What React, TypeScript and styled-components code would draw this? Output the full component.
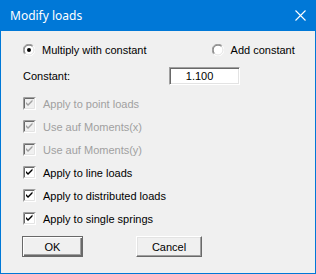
import React from 'react';
import styled, { createGlobalStyle } from 'styled-components';

const GlobalStyle = createGlobalStyle`
    html, body {
        margin: 0;
        padding: 0;
        background: #f0f0f0;
    }
`;

const Window = styled.div`
    width: 316px;
    height: 274px;
    box-sizing: border-box;
    border: 1px solid #0078d7;
    border-top: none;
    background: #f0f0f0;
    display: flex;
    flex-direction: column;
    font-family: "Liberation Sans", Arial, sans-serif;
    font-size: 11px;
    color: #000;
`;

const TitleBar = styled.div`
    height: 31px;
    margin: 0 -1px;
    background: #0078d7;
    color: #fff;
    display: flex;
    align-items: center;
    justify-content: space-between;
    padding: 0 10px 0 10px;
    font-family: "Noto Sans", "Open Sans", sans-serif;
    font-size: 12px;
`;

const Body = styled.div`
    display: flex;
    flex-direction: column;
    padding: 11px 0 0 22px;
`;

const RadioRow = styled.div`
    display: flex;
    align-items: center;
    height: 16px;
`;

const Option = styled.label<{ $offset?: number; $disabled?: boolean }>`
    display: flex;
    align-items: center;
    gap: 7px;
    margin-left: ${(p) => p.$offset ?? 0}px;
    color: ${(p) => (p.$disabled ? '#a0a0a0' : '#000')};
    white-space: nowrap;
`;

const ConstantRow = styled.div`
    display: flex;
    align-items: center;
    height: 18px;
    margin-top: 9px;
`;

const ValueBox = styled.div`
    width: 71px;
    height: 18px;
    box-sizing: border-box;
    margin-left: 99px;
    background: #fff;
    border: 1px solid;
    border-color: #a0a0a0 #fff #fff #a0a0a0;
    box-shadow: inset 1px 1px #696969, inset -1px -1px #e3e3e3;
    display: flex;
    align-items: center;
    justify-content: center;
    padding-right: 10px;
`;

const CheckList = styled.div`
    display: flex;
    flex-direction: column;
    margin-top: 7px;
`;

const CheckRow = styled.div`
    height: 23px;
    display: flex;
    align-items: center;
`;

const ButtonRow = styled.div`
    display: flex;
    gap: 53px;
    margin-top: 6px;
    margin-left: -1px;
`;

const Button = styled.button<{ $default?: boolean; $width: number }>`
    width: ${(p) => p.$width}px;
    height: 21px;
    box-sizing: border-box;
    padding: 0;
    background: #f0f0f0;
    font-family: "Liberation Sans", Arial, sans-serif;
    font-size: 11px;
    color: #000;
    border: 1px solid;
    border-color: ${(p) => (p.$default ? '#696969' : '#fff #696969 #696969 #fff')};
    box-shadow: ${(p) =>
        p.$default
            ? 'inset 1px 1px #fff, inset -1px -1px #696969, inset -2px -2px #a0a0a0'
            : 'inset -1px -1px #a0a0a0, inset 1px 1px #e3e3e3'};
`;

const CloseIcon = () => (
    <svg width="11" height="11" viewBox="0 0 11 11">
        <path d="M0.5 0.5 L10.5 10.5 M10.5 0.5 L0.5 10.5" stroke="#fff" strokeWidth="1.1" />
    </svg>
);

const Radio = ({ checked }: { checked?: boolean }) => (
    <svg width="12" height="12" viewBox="0 0 12 12">
        <circle cx="6" cy="6" r="5.5" fill="#fff" />
        <path d="M1.8 10.2 A5.5 5.5 0 0 1 10.2 1.8" stroke="#a0a0a0" fill="none" />
        <path d="M10.2 1.8 A5.5 5.5 0 0 1 1.8 10.2" stroke="#fff" fill="none" />
        <path d="M2.5 9.5 A4.6 4.6 0 0 1 9.5 2.5" stroke="#696969" fill="none" />
        <path d="M9.5 2.5 A4.6 4.6 0 0 1 2.5 9.5" stroke="#e3e3e3" fill="none" />
        {checked && <circle cx="6" cy="6" r="2" fill="#000" />}
    </svg>
);

const Check = ({ disabled }: { disabled?: boolean }) => (
    <svg width="13" height="13" viewBox="0 0 13 13">
        <rect x="0" y="0" width="13" height="13" fill="#fff" />
        <rect x="2" y="2" width="9" height="9" fill={disabled ? '#f0f0f0' : '#fff'} />
        <path d="M0.5 12.5 V0.5 H12.5" stroke="#a0a0a0" fill="none" />
        <path d="M1.5 11.5 V1.5 H11.5" stroke="#696969" fill="none" />
        <path d="M1.5 11.5 H11.5 V1.5" stroke="#e3e3e3" fill="none" />
        <path
            d="M3 5 L5 7 L9.5 2.5 L9.5 4.5 L5 9 L3 7 Z"
            fill={disabled ? '#a0a0a0' : '#000'}
        />
    </svg>
);

const checks = [
    { label: 'Apply to point loads', disabled: true },
    { label: 'Use auf Moments(x)', disabled: true },
    { label: 'Use auf Moments(y)', disabled: true },
    { label: 'Apply to line loads' },
    { label: 'Apply to distributed loads' },
    { label: 'Apply to single springs' },
];

const App: React.FC = () => (
    <>
        <GlobalStyle />
        <Window>
            <TitleBar>
                <span>Modify loads</span>
                <CloseIcon />
            </TitleBar>
            <Body>
                <RadioRow>
                    <Option>
                        <Radio checked />
                        Multiply with constant
                    </Option>
                    <Option $offset={65}>
                        <Radio />
                        Add constant
                    </Option>
                </RadioRow>
                <ConstantRow>
                    <span>Constant:</span>
                    <ValueBox>1.100</ValueBox>
                </ConstantRow>
                <CheckList>
                    {checks.map((c) => (
                        <CheckRow key={c.label}>
                            <Option $disabled={c.disabled}>
                                <Check disabled={c.disabled} />
                                {c.label}
                            </Option>
                        </CheckRow>
                    ))}
                </CheckList>
                <ButtonRow>
                    <Button $default $width={61}>OK</Button>
                    <Button $width={66}>Cancel</Button>
                </ButtonRow>
            </Body>
        </Window>
    </>
);

export default App;
